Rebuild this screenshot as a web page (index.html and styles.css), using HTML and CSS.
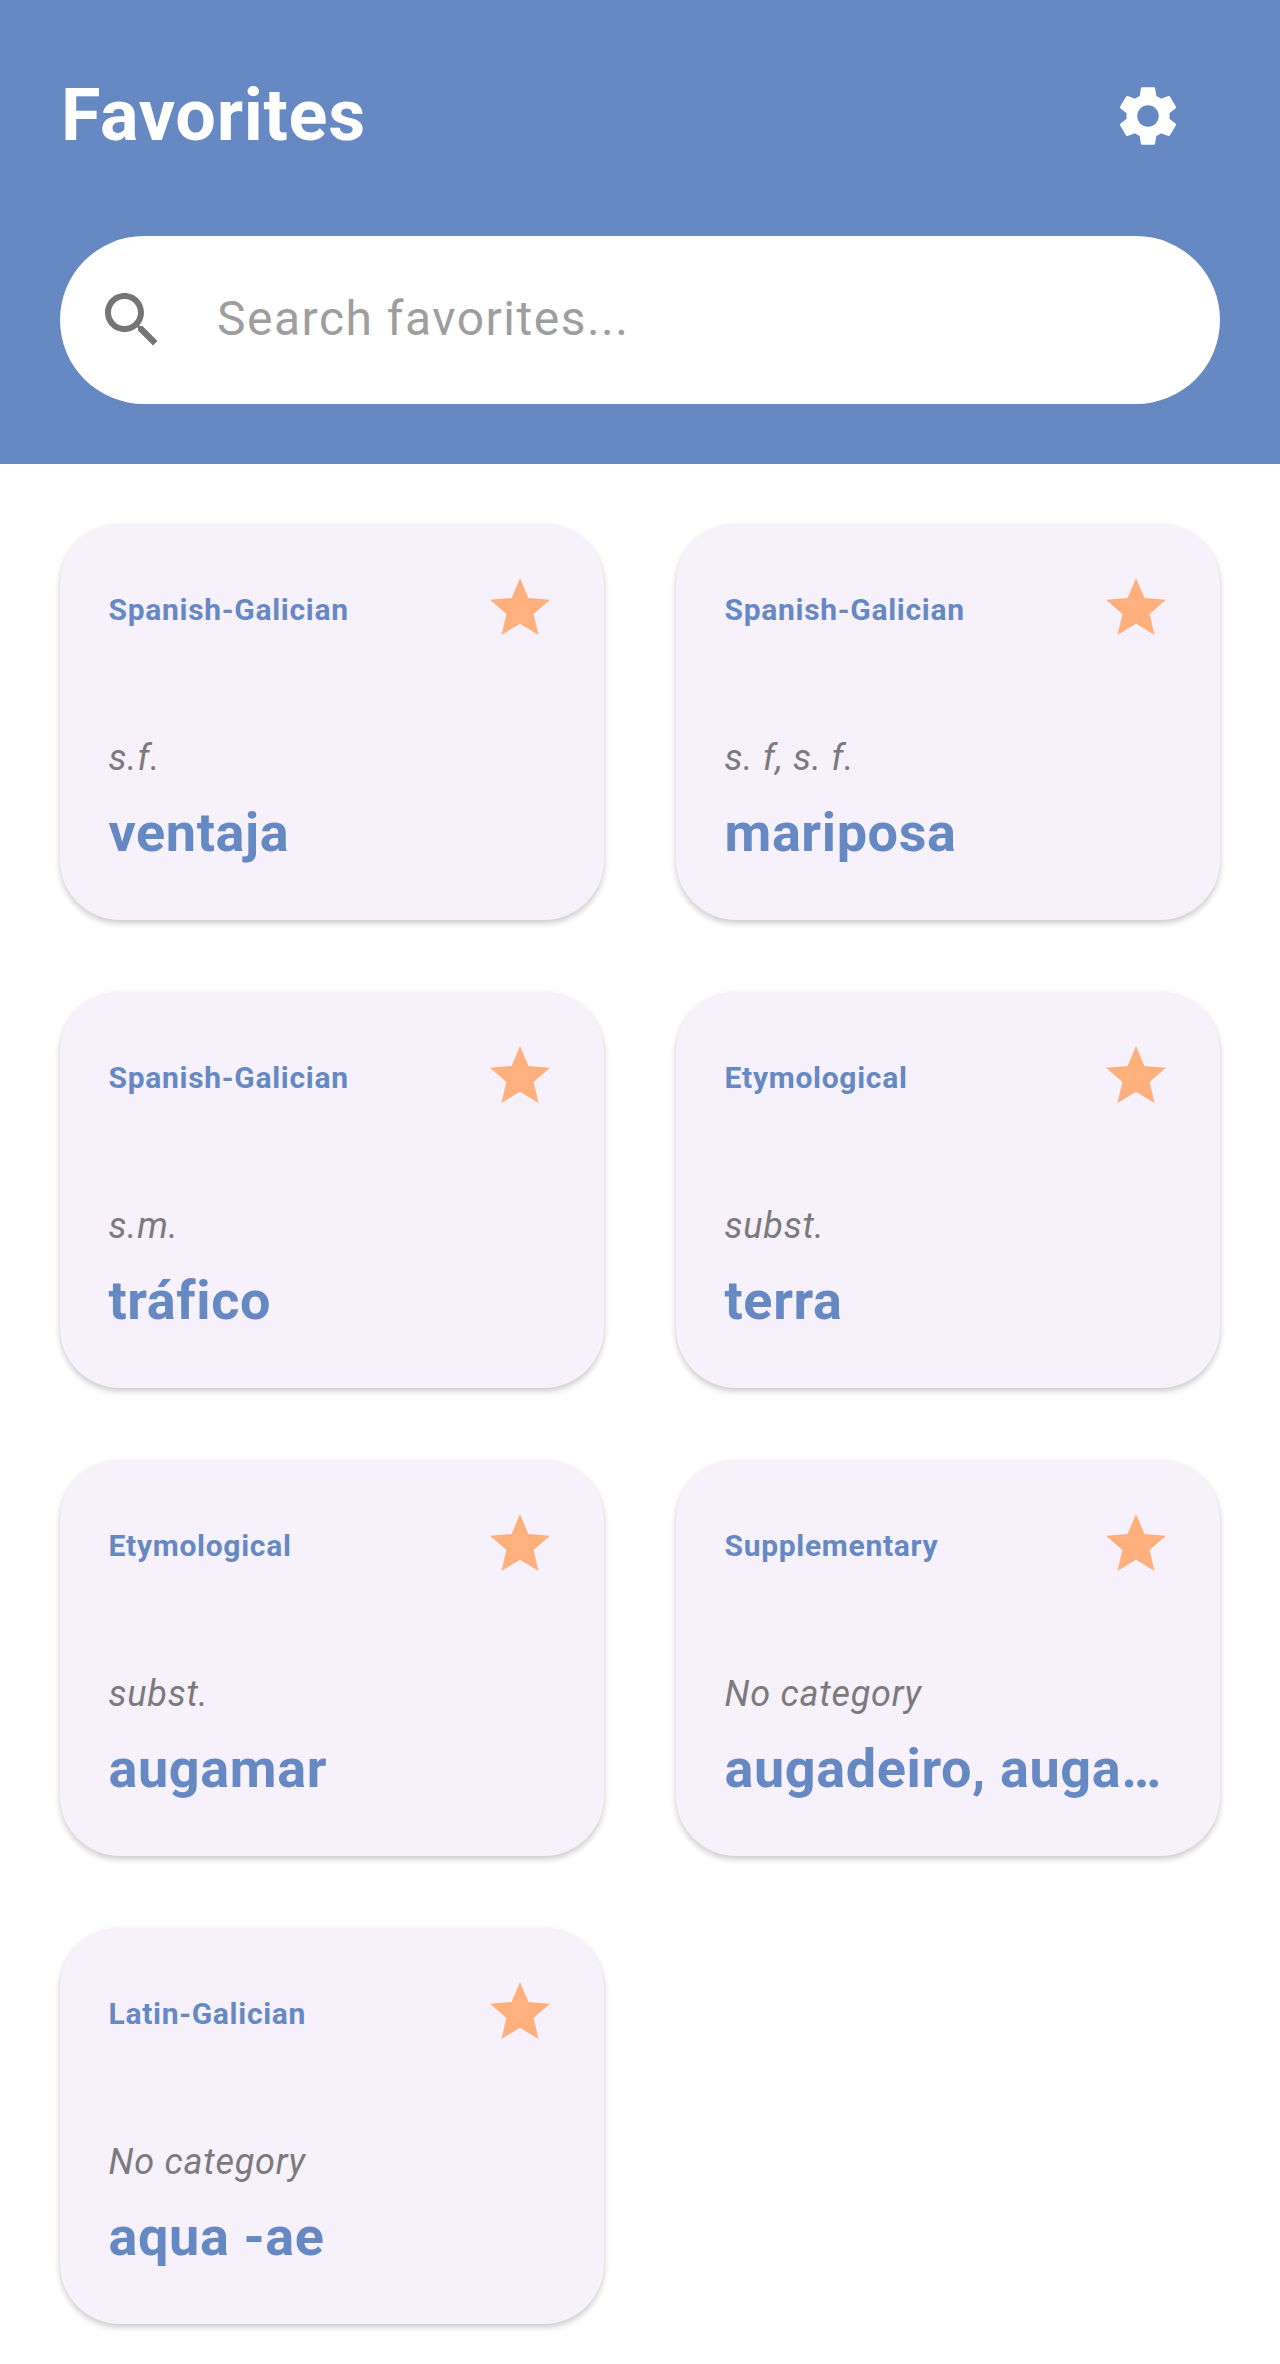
FILE: index.html
```html
<!DOCTYPE html>
<html lang="en">
<head>
<meta charset="utf-8">
<title>Favorites</title>
<link rel="stylesheet" href="styles.css">
</head>
<body>
<header class="header">
  <div class="top-row">
    <h1 class="title">Favorites</h1>
    <button class="icon-btn" aria-label="Settings">
      <svg class="icon" viewBox="0 0 24 24"><path d="M19.14 12.94c.04-.3.06-.61.06-.94 0-.32-.02-.64-.07-.94l2.03-1.58c.18-.14.23-.41.12-.61l-1.92-3.32c-.12-.22-.37-.29-.59-.22l-2.39.96c-.5-.38-1.03-.7-1.62-.94l-.36-2.54c-.04-.24-.24-.41-.48-.41h-3.84c-.24 0-.43.17-.47.41l-.36 2.54c-.59.24-1.13.57-1.62.94l-2.39-.96c-.22-.08-.47 0-.59.22L2.74 8.87c-.12.21-.08.47.12.61l2.03 1.58c-.05.3-.09.63-.09.94s.02.64.07.94l-2.03 1.58c-.18.14-.23.41-.12.61l1.92 3.32c.12.22.37.29.59.22l2.39-.96c.5.38 1.03.7 1.62.94l.36 2.54c.05.24.24.41.48.41h3.84c.24 0 .44-.17.47-.41l.36-2.54c.59-.24 1.13-.56 1.62-.94l2.39.96c.22.08.47 0 .59-.22l1.92-3.32c.12-.22.07-.47-.12-.61l-2.01-1.58zM12 15.6c-1.98 0-3.6-1.62-3.6-3.6s1.62-3.6 3.6-3.6 3.6 1.62 3.6 3.6-1.62 3.6-3.6 3.6z"/></svg>
    </button>
  </div>
  <div class="search">
    <svg class="icon search-icon" viewBox="0 0 24 24"><path d="M15.5 14h-.79l-.28-.27C15.41 12.59 16 11.11 16 9.5 16 5.91 13.09 3 9.5 3S3 5.91 3 9.5 5.91 16 9.5 16c1.61 0 3.09-.59 4.23-1.57l.27.28v.79l5 4.99L20.49 19l-4.99-5zm-6 0C7.01 14 5 11.99 5 9.5S7.01 5 9.5 5 14 7.01 14 9.5 11.99 14 9.5 14z"/></svg>
    <span class="search-text">Search favorites...</span>
  </div>
</header>
<main class="grid">
  <article class="card">
    <div class="card-top"><span class="source">Spanish-Galician</span><svg class="icon star" viewBox="0 0 24 24"><path d="M12 17.27L18.18 21l-1.64-7.03L22 9.24l-7.19-.61L12 2 9.19 8.63 2 9.24l5.46 4.73L5.82 21z"/></svg></div>
    <div class="card-bottom"><div class="cat">s.f.</div><div class="word">ventaja</div></div>
  </article>
  <article class="card">
    <div class="card-top"><span class="source">Spanish-Galician</span><svg class="icon star" viewBox="0 0 24 24"><path d="M12 17.27L18.18 21l-1.64-7.03L22 9.24l-7.19-.61L12 2 9.19 8.63 2 9.24l5.46 4.73L5.82 21z"/></svg></div>
    <div class="card-bottom"><div class="cat">s. f, s. f.</div><div class="word">mariposa</div></div>
  </article>
  <article class="card">
    <div class="card-top"><span class="source">Spanish-Galician</span><svg class="icon star" viewBox="0 0 24 24"><path d="M12 17.27L18.18 21l-1.64-7.03L22 9.24l-7.19-.61L12 2 9.19 8.63 2 9.24l5.46 4.73L5.82 21z"/></svg></div>
    <div class="card-bottom"><div class="cat">s.m.</div><div class="word">tráfico</div></div>
  </article>
  <article class="card">
    <div class="card-top"><span class="source">Etymological</span><svg class="icon star" viewBox="0 0 24 24"><path d="M12 17.27L18.18 21l-1.64-7.03L22 9.24l-7.19-.61L12 2 9.19 8.63 2 9.24l5.46 4.73L5.82 21z"/></svg></div>
    <div class="card-bottom"><div class="cat">subst.</div><div class="word">terra</div></div>
  </article>
  <article class="card">
    <div class="card-top"><span class="source">Etymological</span><svg class="icon star" viewBox="0 0 24 24"><path d="M12 17.27L18.18 21l-1.64-7.03L22 9.24l-7.19-.61L12 2 9.19 8.63 2 9.24l5.46 4.73L5.82 21z"/></svg></div>
    <div class="card-bottom"><div class="cat">subst.</div><div class="word">augamar</div></div>
  </article>
  <article class="card">
    <div class="card-top"><span class="source">Supplementary</span><svg class="icon star" viewBox="0 0 24 24"><path d="M12 17.27L18.18 21l-1.64-7.03L22 9.24l-7.19-.61L12 2 9.19 8.63 2 9.24l5.46 4.73L5.82 21z"/></svg></div>
    <div class="card-bottom"><div class="cat">No category</div><div class="word">augadeiro, auga…</div></div>
  </article>
  <article class="card">
    <div class="card-top"><span class="source">Latin-Galician</span><svg class="icon star" viewBox="0 0 24 24"><path d="M12 17.27L18.18 21l-1.64-7.03L22 9.24l-7.19-.61L12 2 9.19 8.63 2 9.24l5.46 4.73L5.82 21z"/></svg></div>
    <div class="card-bottom"><div class="cat">No category</div><div class="word">aqua -ae</div></div>
  </article>
</main>
</body>
</html>
```
FILE: styles.css
```css
* { box-sizing: border-box; }
html, body { margin: 0; padding: 0; background: #fff; }
body { font-family: Roboto, "Liberation Sans", sans-serif; height: 2364px; overflow: hidden; }
.icon { display: block; width: 72px; height: 72px; flex: none; }
.header { background: #6689c3; height: 464px; padding: 56px 60px 0; }
.top-row { display: flex; justify-content: space-between; align-items: center; height: 120px; }
.title { margin: 0 0 0 1px; font-size: 72px; line-height: 120px; font-weight: 700; color: #fff; letter-spacing: .7px; }
.icon-btn { width: 120px; height: 120px; margin-right: 12px; padding: 24px; border: 0; background: none; fill: #fff; }
.search { display: flex; align-items: center; height: 168px; margin-top: 60px; padding-left: 36px; background: #fff; border-radius: 84px; }
.search-icon { fill: #757575; }
.search-text { margin: 0 0 4px 49px; font-size: 48px; letter-spacing: 1.5px; color: #9e9e9e; }
.grid { display: grid; grid-template-columns: 544px 544px; column-gap: 72px; row-gap: 72px; padding: 60px 60px 0; }
.card { display: flex; flex-direction: column; justify-content: space-between; height: 396px; padding: 48px 48px 55px 48.5px; background: #f6f1fa; border-radius: 60px; box-shadow: 0 3px 6px rgba(0,0,0,.22); }
.card-top { display: flex; justify-content: space-between; align-items: center; height: 72px; }
.source { padding-top: 3px; font-size: 30px; font-weight: 700; color: #6689c3; letter-spacing: .7px; }
.star { fill: #ffb07c; }
.cat { font-size: 36px; line-height: 42px; font-style: italic; font-weight: 400; color: #7c7a7d; letter-spacing: .75px; }
.word { margin-top: 22px; font-size: 54px; line-height: 64px; font-weight: 700; color: #6689c3; white-space: nowrap; letter-spacing: .6px; }
```
